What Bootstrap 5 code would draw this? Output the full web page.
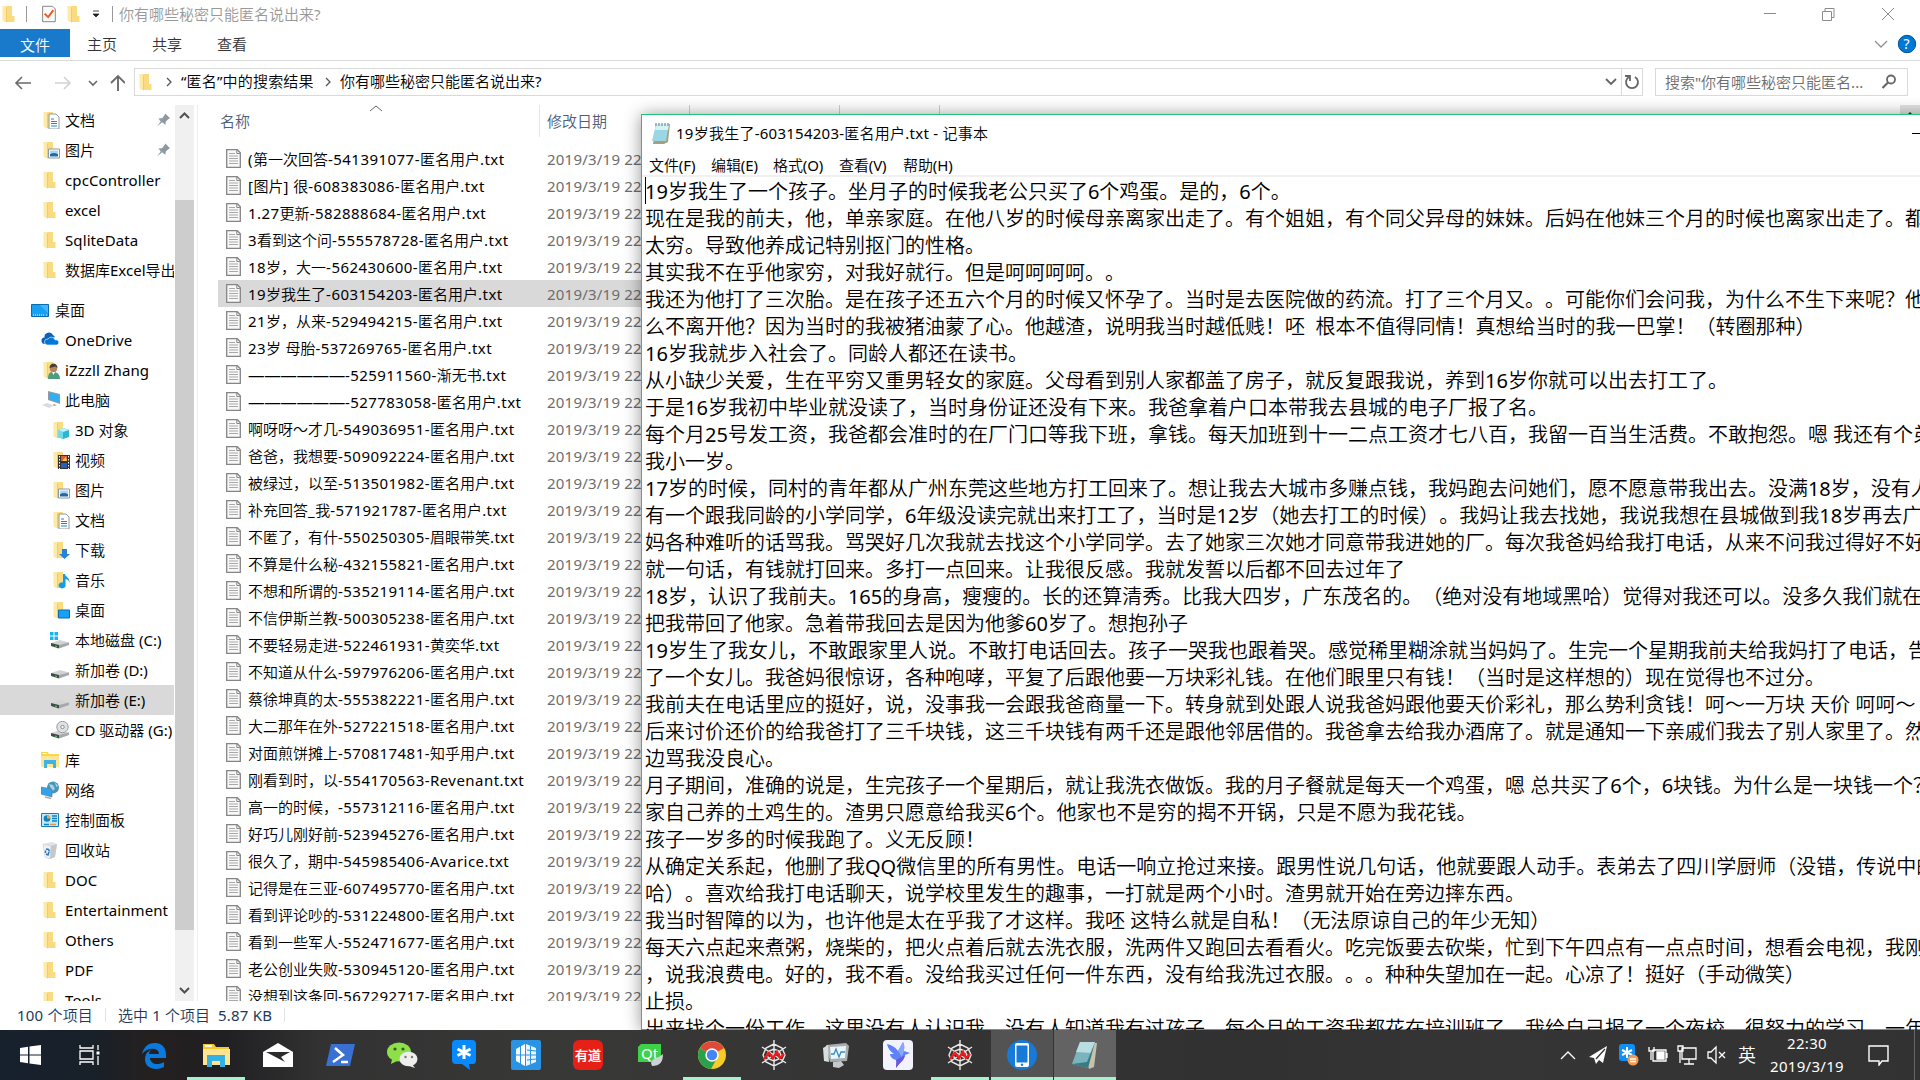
<!DOCTYPE html>
<html lang="zh-CN">
<head>
<meta charset="utf-8">
<title>你有哪些秘密只能匿名说出来?</title>
<link href="https://cdn.jsdelivr.net/npm/bootstrap@5.3.0/dist/css/bootstrap.min.css" rel="stylesheet">
<style>
body{width:1920px;height:1080px;overflow:hidden;background:#fff;color:#000;font:15px/20px "Noto Sans","Noto Sans CJK SC DemiLight","Noto Sans CJK SC",sans-serif;text-spacing-trim:space-all}
svg{display:block;flex:none}
.txt-nowrap{white-space:pre}
.titlebar{height:29px;color:#999;padding-bottom:1px}
.vline{width:1px;height:16px;background:#999}
.ribbon{height:32px;border-bottom:1px solid #dadbdc;color:#333}
.tab-file{width:70px;height:28px;background:#1979ca;color:#fff}
.tab-item{width:65px}
.navrow{height:44px;padding-top:7px}
.boxed{height:28px;border:1px solid #d9d9d9}
.crumbs{padding-bottom:2px}
.addr{width:1509px;margin-left:9px}
.search{width:253px;margin-left:12px;color:#6d6d6d}
.refresh{width:21px;height:26px;border-left:1px solid #d9d9d9}
.mainrow{height:896px;overflow:hidden}
.side{width:175px;height:896px;overflow:hidden}
.side-item{height:30px;width:174px;overflow:hidden}
.side-item.sel,.file-item.sel{background:#d9d9d9}
.side-gap{height:10px}
.sbar{width:20px;background:#f0f0f0;border-right:1px solid #fff}
.sbar-top{height:95px;padding-top:6px}
.sbar-thumb{height:730px;background:#cdcdcd}
.sbar-bottom{height:71px;padding-top:57px}
.files{margin-left:2px;border-left:1px solid #eee;flex:1}
.file-head{height:40px;color:#4c607a}
.head-name{width:342px;height:32px;border-right:1px solid #e5e5e5;padding-left:22px;padding-top:6px;position:relative}
.sort-mark{position:absolute;left:171px;top:0}
.head-date{padding:6px 0 0 7px}
.file-item{height:27px;margin-left:20px;padding-left:8px}
.file-item .fname{width:299px;margin-left:7px}
.file-item .fdate{color:#6d6d6d;letter-spacing:.22px}
.num{letter-spacing:.46px}
.dashes{font-size:16.6px;letter-spacing:-.45px}
.status{height:29px;color:#1e395b;padding-left:17px;padding-bottom:2px}
.status .sep{width:1px;height:14px;background:#e3e3e3}
.notepad{position:absolute;left:641px;top:114px;width:1300px;height:916px;background:#fff;border:1px solid #22c27a;box-shadow:0 1px 16px rgba(0,0,0,.42)}
.clipper{position:absolute;left:0;top:0;width:1920px;height:1030px;overflow:hidden}
.np-title{height:39px;padding-left:9px;padding-bottom:3px}
.np-title .caption{width:316px;margin-left:5px;letter-spacing:.25px}
.np-menu{height:23px;border-bottom:2px solid #f0f0f0;padding-left:7px;letter-spacing:-.1px}
.np-text{font-size:20px;line-height:27px;padding:1px 0 0 3px}
.caret{position:absolute;left:3px;top:62px;width:1px;height:27px;background:#000}
.colmark{position:absolute;top:105px;width:1px;height:9px;background:#cfcfcf}
.upstub{position:absolute;left:1900px;top:105px;width:20px;height:9px;background:#e2e2e2}
.tbar{position:relative;height:50px;background:linear-gradient(90deg,#17212d 0,#182029 90px,#252020 150px,#201f22 225px,#323232 320px,#383837 560px,#343434 900px,#303130 1250px,#353535 1500px,#323232 1920px);color:#fff}
.task{width:62px;height:50px;display:flex;align-items:center;justify-content:center;border-bottom:3px solid transparent;padding-top:3px;flex:none}
.task-first{width:61px}
.task.run{border-image:linear-gradient(90deg,transparent 5px,#a7efcd 5px,#a7efcd 57px,transparent 57px) 3}
.task.on{border-color:#a7efcd;background:#535353;background-clip:padding-box}
.task.on2{border-color:#a7efcd;background:#636363;margin-left:1px}
.clock{width:90px;line-height:23px;text-align:center;letter-spacing:.3px}
.tray{position:absolute;left:1560px;top:0;height:50px}
</style>
</head>
<body>
<svg width="0" height="0" class="position-absolute">
<defs>
<symbol id="folder" viewBox="0 0 18 18"><path d="M4 1h7v10h2.500v6H4z" fill="#f9dc82"/><path d="M1.500 1h4v16H4l-2.500-1.500z" fill="#ffe9a6"/><path d="M5 2l1 .5V17.500L5 17z" fill="#efcb6b"/></symbol>
<symbol id="doc" viewBox="0 0 18 18"><use href="#folder"/><path d="M7 3h7l3 3v12H7z" fill="#fff" stroke="#8d989f"/><path d="M9 8h3M9 10.500h6M9 12.500h6M9 15h6" stroke="#1b87c9" stroke-width="1.200"/></symbol>
<symbol id="pic" viewBox="0 0 18 18"><use href="#folder"/><path d="M6.500 8h11v9h-11z" fill="#fff" stroke="#8c999f"/><path d="M8 9.500h8v3H8z" fill="#a9d5f2"/><path d="M8 13q4-2 8 0v2.500H8z" fill="#2469a0"/></symbol>
<symbol id="desktop" viewBox="0 0 18 18"><path d="M.5 3.500h17v12H.5z" fill="#18a0f5" stroke="#0b6cad"/><path d="M2 14h12M15 14h1" stroke="#fff" stroke-dasharray="1 1"/><path d="M9 4h8v8z" fill="#45b7ff"/></symbol>
<symbol id="cloud" viewBox="0 0 18 18"><path d="M4 13a3.200 3.200 0 0 1-.5-6.500A4.500 4.500 0 0 1 12 4l2 2-7 3z" fill="#0b63b8"/><path d="M6 14a3 3 0 0 1 1-6 4 4 0 0 1 7.200 1A2.500 2.500 0 0 1 16 14z" fill="#0078d7" stroke="#fff" stroke-width=".6"/></symbol>
<symbol id="user" viewBox="0 0 18 18"><use href="#folder"/><path d="M6 18c0-6 2-7 5-7s7 1 7 7z" fill="#509c7d"/><circle cx="11.500" cy="7.500" r="3.700" fill="#b9835f"/><path d="M7.500 7c0-6 8-6 8 0l-2-1.500z" fill="#493e37"/><path d="M10 11h3l-1.500 3z" fill="#fff"/></symbol>
<symbol id="pc" viewBox="0 0 18 18"><path d="M6 0l12 3v10L6 9z" fill="#8e9da7"/><path d="M7 1.500l10 2.500v7.500L7 8.300z" fill="#33aef2"/><path d="M0 14l5-2 7 2.500L7 17z" fill="#d7dde1"/><path d="M11 13l4 1-3 1z" fill="#899aa5"/></symbol>
<symbol id="cube" viewBox="0 0 18 18"><use href="#folder"/><path d="M6 9l5-2 6 2v7l-6 2-5-2z" fill="#2eb6cf"/><path d="M6 9l5 2v7l-5-2z" fill="#73dbe8"/><path d="M6 9l5-2 6 2-6 2z" fill="#bff3f6"/></symbol>
<symbol id="video" viewBox="0 0 18 18"><use href="#folder"/><path d="M6 4h12v14H6z" fill="#333"/><path d="M9 5h6v5H9z" fill="#e15a3a"/><path d="M9 12h6v5H9z" fill="#285ec0"/><path d="M10 10l4-4 1 4z" fill="#f6cd34"/><path d="M7.500 5v13M16.500 5v13" stroke="#fff" stroke-dasharray="1.500 1.500"/></symbol>
<symbol id="down" viewBox="0 0 18 18"><use href="#folder"/><path d="M10 8h5v5h3l-5.500 5L7 13h3z" fill="#2584d8"/></symbol>
<symbol id="music" viewBox="0 0 18 18"><use href="#folder"/><path d="M11 3h2c0 3 5 3 4.500 9-1-3-2-3.500-4-4v6a3.500 3 0 1 1-2.500-2.500z" fill="#159ce8"/></symbol>
<symbol id="deskf" viewBox="0 0 18 18"><use href="#folder"/><path d="M6.500 9h11v8h-11z" fill="#18a0f5" stroke="#0b6cad"/></symbol>
<symbol id="drive" viewBox="0 0 20 18"><path d="M1 12l9-3 9 2.500v1.500L10 17 1 14z" fill="#d2d3d6"/><path d="M1 12l8 2v3.500l-8-2.500z" fill="#454b4b"/><path d="M9 14l10-2.500v2.500L9 17.500z" fill="#a5a7aa"/><path d="M5 15l2 .6" stroke="#4cd964"/></symbol>
<symbol id="drivec" viewBox="0 0 20 18"><use href="#drive"/><path d="M0 1h3.500v3.500H0zM4.500 1H8v3.500H4.500zM0 5.500h3.500V9H0zM4.500 5.500H8V9H4.500z" fill="#16b4f0"/></symbol>
<symbol id="cd" viewBox="0 0 20 18"><use href="#drive"/><circle cx="12.500" cy="6" r="5.700" fill="#dfe2e4" stroke="#9a9a9a"/><circle cx="12.500" cy="6" r="1.700" fill="#fff" stroke="#888"/></symbol>
<symbol id="lib" viewBox="0 0 18 18"><path d="M0 1h7l1 2h10v12H0z" fill="#fbd64f"/><path d="M0 5h18v11H0z" fill="#ffe694"/><path d="M3 9h12v8h-3v-4H6v4H3z" fill="#3eb3e8"/><path d="M1.500 2.500h4" stroke="#fff"/></symbol>
<symbol id="net" viewBox="0 0 18 18"><circle cx="12" cy="6.500" r="6" fill="#4795bd"/><path d="M8 3l4 1 2 4-3 2zM14 1l3 4-2 1z" fill="#abd5e4"/><path d="M0 6l11 2v8L0 13z" fill="#2ea4ee" stroke="#667f8e" stroke-width=".7"/><path d="M4 16l6 1.500" stroke="#a8afb3" stroke-width="1.500"/></symbol>
<symbol id="panel" viewBox="0 0 18 18"><path d="M.5 2.500h17v13H.5z" fill="#bce9fd" stroke="#1680bd"/><circle cx="6" cy="7.500" r="3.300" fill="#1580be"/><path d="M6 7.500V4.200a3.300 3.300 0 0 1 3.300 3.300z" fill="#f9a537"/><path d="M11 5h5M11 7.500h5M11 10h5M3 13.500h5" stroke="#1680bd" stroke-width="1.500"/><path d="M9 13.500h6" stroke="#f0943b" stroke-width="1.500"/></symbol>
<symbol id="bin" viewBox="0 0 18 18"><path d="M2 3l9-2 5 2-2 13-5 2-5-2z" fill="#dfe3e6"/><path d="M2 3l8 2-1 13-5-2z" fill="#eff2f4" stroke="#c7ccd0" stroke-width=".6"/><path d="M10 5l6-2-2 13-5 2z" fill="#c3c8cc"/><path d="M5 8l2.500.5 1 2M8 11l-1 3-2-1M4.500 12V9.500" stroke="#2676c2" stroke-width="1.500" fill="none"/></symbol>
<symbol id="page" viewBox="0 0 15 19"><path d="M.7.700h10.600l3 3v14.600H.7z" fill="#f8f8f8" stroke="#858585" stroke-width="1.300"/><path d="M10.800 1v3.500h3" fill="none" stroke="#858585"/><path d="M3 4.500h6M3 7h9M3 9.500h9M3 12h9M3 14.500h9" stroke="#a9a9a9"/></symbol>
<symbol id="pin" viewBox="0 0 14 14"><path d="M9 0l5 5-1.500.8L9.500 8.500 9 12 5.500 9.500 0 14l4-5.500L1.500 5.500 5.500 5l2.500-3z" fill="#8d9aa4"/></symbol>
<symbol id="note" viewBox="0 0 20 22"><path d="M5 2h14l-2 18-4 2H2z" fill="#a79f80"/><path d="M5 2h13l-3 17H1z" fill="#9ad7e4"/><path d="M5 2h13l-1 6H4z" fill="#d5f2f4"/><path d="M5 1v3M8 1v3M11 1v3M14 1v3M17 1v3" stroke="#617680"/></symbol>
<symbol id="web" viewBox="0 0 32 32"><path d="M16 1v30M4 8l24 16M28 8L4 24M16 5L8 9 5 16l3 7 8 4 8-4 3-7-3-7zM16 10l-5 2-2 4 2 4 5 2 5-2 2-4-2-4z" fill="none" stroke="#e9e9e9" stroke-width="1.400"/><path d="M6 20l5-6 4 5 4-6 3 6 4-4" fill="none" stroke="#f11a1a" stroke-width="2.400"/></symbol>
<symbol id="star" viewBox="0 0 26 32"><path d="M5 1h16q4 0 4 4v16q0 4-3 4h-4l1 6-8-6H5q-4 0-4-4V5q0-4 4-4z" fill="#0789ff"/><path d="M13 6v14M6.500 10l13 6.500M19.500 10l-13 6.500" stroke="#fff" stroke-width="3"/></symbol>
</defs>
</svg>

<!-- explorer window -->
<header class="titlebar d-flex align-items-center">
  <svg width="18" height="18" style="margin-left:1px"><use href="#folder"/></svg><span class="vline" style="margin-left:7px"></span>
  <svg width="14" height="18" viewBox="0 0 16 19" style="margin-left:15px"><path d="M.7.700h11.500l3 3v14.600H.7z" fill="#fafafa" stroke="#777"/><path d="M3 9l4 4 6-8" fill="none" stroke="#f0581c" stroke-width="2.200"/></svg>
  <svg width="18" height="18" style="margin-left:10px"><use href="#folder"/></svg>
  <svg width="8" height="8" style="margin-left:8px" viewBox="0 0 8 8"><path d="M1 1h6M1 4h6L4 7z" fill="#222" stroke="#222" stroke-width=".8"/></svg>
  <span class="vline" style="margin-left:12px"></span><span class="txt-nowrap" style="margin-left:6px">你有哪些秘密只能匿名说出来?</span>
  <svg class="ms-auto" width="132" height="16" style="margin-right:25px" viewBox="0 0 132 16" fill="none" stroke="#8c8c8c"><path d="M1 7.500h12M59.500 5.500h9v9h-9zM62 5V2.500h9v9h-2M119 2l12 12M131 2l-12 12"/></svg>
</header>
<nav class="ribbon d-flex">
  <div class="tab-file d-flex align-items-center justify-content-center pt-1 px-2">文件</div>
  <div class="d-flex pt-1" style="padding-left:17px;margin-top:1px"><span class="tab-item">主页</span><span class="tab-item">共享</span><span class="tab-item">查看</span></div>
  <svg class="ms-auto" width="46" height="20" style="margin-top:5px" viewBox="0 0 46 20"><path d="M1 7l6 6 6-6" fill="none" stroke="#909090" stroke-width="1.300"/><circle cx="33" cy="10" r="8.700" fill="#0078d7" stroke="#0a4f94"/><text x="29.500" y="15" font-size="14" fill="#fff">?</text></svg>
</nav>
<div class="navrow d-flex">
  <svg width="125" height="28" viewBox="0 0 125 28" fill="none" stroke="#6a6a6a" stroke-width="1.600"><path d="M31 15H17M22 9l-6 6 6 6"/><path d="M55 15h14M64 9l6 6-6 6" stroke="#d2d2d2"/><path d="M89 13l4 4 4-4"/><path d="M118 23V9M111 15l7-7 7 7" stroke-width="1.900"/></svg>
  <div class="addr boxed d-flex align-items-center">
    <svg width="18" height="18" style="margin-left:3px"><use href="#folder"/></svg>
    <svg width="6" height="10" style="margin-left:10px" viewBox="0 0 6 10"><path d="M1 1l4 4-4 4" fill="none" stroke="#555" stroke-width="1.300"/></svg>
    <span class="txt-nowrap crumbs" style="width:134px;margin-left:9px;letter-spacing:.2px">“匿名”中的搜索结果</span>
    <svg width="6" height="10" style="margin-left:10px" viewBox="0 0 6 10"><path d="M1 1l4 4-4 4" fill="none" stroke="#555" stroke-width="1.300"/></svg>
    <span class="txt-nowrap crumbs" style="margin-left:9px">你有哪些秘密只能匿名说出来?</span>
    <svg width="12" height="8" class="ms-auto me-1" viewBox="0 0 12 8"><path d="M1 1l5 5 5-5" fill="none" stroke="#666" stroke-width="1.900"/></svg>
    <div class="refresh d-flex align-items-center justify-content-center"><svg width="16" height="16" viewBox="0 0 16 16"><path d="M5 3a6 6 0 1 0 6 0M1 2h5v5" fill="none" stroke="#666" stroke-width="1.800"/></svg></div>
  </div>
  <div class="search boxed d-flex align-items-center"><span class="txt-nowrap" style="margin-left:9px">搜索"你有哪些秘密只能匿名...</span><svg class="ms-auto" width="16" height="16" style="margin-right:10px" viewBox="0 0 16 16"><circle cx="10" cy="5.500" r="4" fill="none" stroke="#666" stroke-width="1.800"/><path d="M7 8.500L1.500 14" stroke="#666" stroke-width="2.200"/></svg></div>
</div>
<main class="mainrow d-flex">
  <aside class="side" id="side"></aside>
  <div class="sbar">
    <div class="sbar-top"><svg width="19" height="8" viewBox="0 0 19 8"><path d="M5 7l4.500-4.500L14 7" fill="none" stroke="#505050" stroke-width="2"/></svg></div>
    <div class="sbar-thumb"></div>
    <div class="sbar-bottom"><svg width="19" height="8" viewBox="0 0 19 8"><path d="M5 1l4.500 4.500L14 1" fill="none" stroke="#505050" stroke-width="2"/></svg></div>
  </div>
  <section class="files">
    <div class="file-head d-flex"><div class="head-name">名称<svg class="sort-mark" width="14" height="7" viewBox="0 0 14 7"><path d="M1 6l6-5 6 5" fill="none" stroke="#666"/></svg></div><div class="head-date">修改日期</div></div>
    <div id="files"></div>
  </section>
</main>
<footer class="status d-flex align-items-center"><span class="txt-nowrap" style="width:88px;letter-spacing:.2px">100 个项目</span><span class="sep"></span><span class="txt-nowrap" style="width:100px;margin-left:12px;letter-spacing:.1px">选中 1 个项目</span><span class="txt-nowrap" style="width:66px;letter-spacing:.2px">5.87 KB</span><span class="sep"></span></footer>

<!-- notepad window, overlapping the explorer -->
<div class="clipper">
  <div class="upstub"><svg width="20" height="9" viewBox="0 0 20 9"><path d="M8 9l2-2 2 2z" fill="#333"/></svg></div>
  <span class="colmark" style="left:689px"></span><span class="colmark" style="left:839px"></span><span class="colmark" style="left:939px"></span>
  <div class="notepad">
    <div class="np-title d-flex align-items-center"><svg width="20" height="22"><use href="#note"/></svg><span class="txt-nowrap caption">19岁我生了-603154203-匿名用户.txt - 记事本</span><svg width="14" height="3" style="margin-left:920px"><path d="M0 1.500h14" stroke="#000"/></svg></div>
    <div class="np-menu d-flex align-items-center"><span style="width:62px">文件(F)</span><span style="width:62px">编辑(E)</span><span style="width:66px">格式(O)</span><span style="width:64px">查看(V)</span><span>帮助(H)</span></div>
    <div class="caret"></div>
    <div class="np-text txt-nowrap">19岁我生了一个孩子。坐月子的时候我老公只买了6个鸡蛋。是的，6个。
现在是我的前夫，他，单亲家庭。在他八岁的时候母亲离家出走了。有个姐姐，有个同父异母的妹妹。后妈在他妹三个月的时候也离家出走了。都
太穷。导致他养成记特别抠门的性格。
其实我不在乎他家穷，对我好就行。但是呵呵呵呵。。
我还为他打了三次胎。是在孩子还五六个月的时候又怀孕了。当时是去医院做的药流。打了三个月又。。可能你们会问我，为什么不生下来呢？他
么不离开他？因为当时的我被猪油蒙了心。他越渣，说明我当时越低贱！呸  根本不值得同情！真想给当时的我一巴掌！（转圈那种）
16岁我就步入社会了。同龄人都还在读书。
从小缺少关爱，生在平穷又重男轻女的家庭。父母看到别人家都盖了房子，就反复跟我说，养到16岁你就可以出去打工了。
于是16岁我初中毕业就没读了，当时身份证还没有下来。我爸拿着户口本带我去县城的电子厂报了名。
每个月25号发工资，我爸都会准时的在厂门口等我下班，拿钱。每天加班到十一二点工资才七八百，我留一百当生活费。不敢抱怨。嗯 我还有个弟
我小一岁。
17岁的时候，同村的青年都从广州东莞这些地方打工回来了。想让我去大城市多赚点钱，我妈跑去问她们，愿不愿意带我出去。没满18岁，没有人
有一个跟我同龄的小学同学，6年级没读完就出来打工了，当时是12岁（她去打工的时候）。我妈让我去找她，我说我想在县城做到我18岁再去广
妈各种难听的话骂我。骂哭好几次我就去找这个小学同学。去了她家三次她才同意带我进她的厂。每次我爸妈给我打电话，从来不问我过得好不好
就一句话，有钱就打回来。多打一点回来。让我很反感。我就发誓以后都不回去过年了
18岁，认识了我前夫。165的身高，瘦瘦的。长的还算清秀。比我大四岁，广东茂名的。（绝对没有地域黑哈）觉得对我还可以。没多久我们就在
把我带回了他家。急着带我回去是因为他爹60岁了。想抱孙子
19岁生了我女儿，不敢跟家里人说。不敢打电话回去。孩子一哭我也跟着哭。感觉稀里糊涂就当妈妈了。生完一个星期我前夫给我妈打了电话，告
了一个女儿。我爸妈很惊讶，各种咆哮，平复了后跟他要一万块彩礼钱。在他们眼里只有钱！（当时是这样想的）现在觉得也不过分。
我前夫在电话里应的挺好，说，没事我一会跟我爸商量一下。转身就到处跟人说我爸妈跟他要天价彩礼，那么势利贪钱！呵～一万块 天价 呵呵～
后来讨价还价的给我爸打了三千块钱，这三千块钱有两千还是跟他邻居借的。我爸拿去给我办酒席了。就是通知一下亲戚们我去了别人家里了。然
边骂我没良心。
月子期间，准确的说是，生完孩子一个星期后，就让我洗衣做饭。我的月子餐就是每天一个鸡蛋，嗯 总共买了6个，6块钱。为什么是一块钱一个？
家自己养的土鸡生的。渣男只愿意给我买6个。他家也不是穷的揭不开锅，只是不愿为我花钱。
孩子一岁多的时候我跑了。义无反顾！
从确定关系起，他删了我QQ微信里的所有男性。电话一响立抢过来接。跟男性说几句话，他就要跟人动手。表弟去了四川学厨师（没错，传说中的
哈）。喜欢给我打电话聊天，说学校里发生的趣事，一打就是两个小时。渣男就开始在旁边摔东西。
我当时智障的以为，也许他是太在乎我了才这样。我呸 这特么就是自私！（无法原谅自己的年少无知）
每天六点起来煮粥，烧柴的，把火点着后就去洗衣服，洗两件又跑回去看看火。吃完饭要去砍柴，忙到下午四点有一点点时间，想看会电视，我刚
，说我浪费电。好的，我不看。没给我买过任何一件东西，没有给我洗过衣服。。。种种失望加在一起。心凉了！挺好（手动微笑）
止损。
出来找个一份工作。这里没有人认识我。没有人知道我有过孩子。每个月的工资我都花在培训班了。我给自己报了一个夜校。很努力的学习。一年</div>
  </div>
</div>

<!-- taskbar -->
<div class="tbar d-flex">
  <div class="task task-first"><svg width="21" height="20" viewBox="0 0 21 20"><path d="M0 3l8-1.200V9.500H0zM9.500 1.600L21 0v9.500H9.500zM0 10.500h8v7.700L0 17zM9.500 10.500H21V20L9.500 18.400z" fill="#fff"/></svg></div>
  <div class="task" style="padding-right:4px"><svg width="22" height="20" viewBox="0 0 22 20" fill="none" stroke="#fff" stroke-width="1.300"><path d="M1 0v3h13V0M1 20v-3h13v3M1 6h13v8H1zM19 0v5M19 11v9"/><path d="M17.500 8h3" stroke-width="3"/></svg></div>
  <div class="task"><svg width="26" height="27" viewBox="0 0 26 27"><path d="M1 12C3 4 8 1 14 1c8 0 11 6 11 12v3H9c0 6 8 8 14 4v5c-8 4-19 2-19-8 0-5 3-8 6-9-2 2-2 3-2 4h10c0-7-12-7-17 0z" fill="#0a7bdc"/></svg></div>
  <div class="task run"><svg width="28" height="24" viewBox="0 0 28 24"><path d="M1 1h11l2 3h13v16H1z" fill="#f6c633"/><path d="M1 6h27v16H1z" fill="#ffe591"/><path d="M5 12h18v12h-5v-6h-8v6H5z" fill="#33b1e5"/><path d="M3 3h7" stroke="#fff" stroke-width="2"/></svg></div>
  <div class="task"><svg width="30" height="24" viewBox="0 0 30 24"><path d="M0 9L15 0l15 9v15H0z" fill="#fff"/><path d="M3 9h24l-9 5 4 5z" fill="#2c2c2c"/></svg></div>
  <div class="task"><svg width="29" height="22" viewBox="0 0 29 22"><path d="M5 0h24l-5 22H0z" fill="#3970d2"/><path d="M9 4l8 7-10 7M15 18h7" fill="none" stroke="#fff" stroke-width="2.500"/></svg></div>
  <div class="task"><svg width="31" height="26" viewBox="0 0 31 26"><ellipse cx="12" cy="10" rx="12" ry="9.500" fill="#8ee04a"/><path d="M5 17l-1 5 6-3z" fill="#8ee04a"/><circle cx="8" cy="7" r="1.600" fill="#375d14"/><circle cx="16" cy="7" r="1.600" fill="#375d14"/><ellipse cx="21.500" cy="17" rx="9" ry="7.300" fill="#eee"/><path d="M25 22l3 4-6-2z" fill="#eee"/><circle cx="18.500" cy="15" r="1.200" fill="#777"/><circle cx="25" cy="15" r="1.200" fill="#777"/></svg></div>
  <div class="task"><svg width="26" height="32"><use href="#star"/></svg></div>
  <div class="task"><svg width="30" height="30" viewBox="0 0 30 30"><rect width="30" height="30" rx="2" fill="#2b93e3"/><path d="M5 9l9-5v22l-9-5z" fill="#fff"/><path d="M15 4l10 4v14l-10 4z" fill="#e8f4ff"/><path d="M5 15h20M16 10l9 1M16 20l9-1M9.500 6v18M19.500 6v18M14.500 4v22" stroke="#2b93e3" stroke-width="1"/></svg></div>
  <div class="task"><svg width="30" height="30" viewBox="0 0 30 30"><rect width="30" height="30" rx="6" fill="#e62016"/><text x="15" y="20" text-anchor="middle" font-size="13" font-weight="900" fill="#fff">有道</text></svg></div>
  <div class="task"><svg width="26" height="24" viewBox="0 0 26 24"><path d="M4 1h20v18H1V4z" fill="#3ed24b"/><text x="12.500" y="16" text-anchor="middle" font-size="15" fill="#fff">Qt</text><path d="M26 11c0 8-3 12-11 12l-1-3c2-6 7-4 12-9z" fill="#cfd1d3"/></svg></div>
  <div class="task run"><svg width="28" height="28" viewBox="0 0 28 28"><circle cx="14" cy="14" r="14" fill="#f7cc28"/><path d="M14 14L2 7a14 14 0 0 1 24.100 0z" fill="#df4939"/><path d="M14 14L1.900 7A14 14 0 0 0 13 28l6-11z" fill="#2ba14b"/><circle cx="14" cy="14" r="6.700" fill="#fff"/><circle cx="14" cy="14" r="5.200" fill="#4285f4"/></svg></div>
  <div class="task"><svg width="32" height="32"><use href="#web"/></svg></div>
  <div class="task"><svg width="28" height="26" viewBox="0 0 28 26"><path d="M4 3l20-2 3 3-2 15-17 1z" fill="#a8adaf"/><path d="M8 5l16-1-1 12-14 1z" fill="#e9f6fc"/><path d="M9 12h3l2-5 3 8 2-5h4" fill="none" stroke="#3a8ac0" stroke-width="1.300"/><path d="M11 20l8-1 3 4-5 3-6-1z" fill="#c5c9cb"/><path d="M1 6l5-3 1 17-5-1z" fill="#dadddd"/></svg></div>
  <div class="task"><svg width="30" height="30" viewBox="0 0 30 30"><rect width="30" height="30" rx="4" fill="#f2f3ff"/><path d="M4 4c5 1 8 3 11 7l5-9c2 4 1 6 1 9l6 2-5 2c-1 6-5 7-9 13 0-5 1-6 0-8-4-1-6-4-6-6l4 0c-3-2-6-5-7-10z" fill="#5f82f8"/><path d="M15 11l5-9c2 4 1 6 1 9l-2 6z" fill="#86a6ff"/><path d="M13 28c0-5 1-6 0-8l9-5c-1 6-5 7-9 13z" fill="#6a58dd"/></svg></div>
  <div class="task run"><svg width="32" height="32"><use href="#web"/></svg></div>
  <div class="task on"><svg width="30" height="30" viewBox="0 0 30 30"><circle cx="15" cy="15" r="15" fill="#187ad8"/><rect x="8" y="3" width="14" height="24" rx="2" fill="#fff"/><path d="M9.500 5.500h11v17h-11z" fill="#187ad8"/><circle cx="15" cy="24.800" r="1.200" fill="#187ad8"/></svg></div>
  <div class="task on2"><svg width="28" height="28" viewBox="0 0 28 28"><path d="M10 2h16l-3 24-5 2z" fill="#c8c2a8"/><path d="M9 1h15l-7 26-16-4z" fill="#7bb4bd"/><path d="M9 1h15l-3 11-16-1z" fill="#b9dde0"/><path d="M1 23l16 4 7-26-8 20z" fill="#397a84"/></svg></div>
  <div class="tray d-flex align-items-center">
    <svg width="198" height="24" viewBox="1560 0 198 24" fill="none" stroke="#fff" stroke-width="1.300"><path d="M1561 16l7-7 7 7"/><path d="M1607 3l-18 11 5 1 2 6 3-4 4 3z" fill="#fff" stroke="none"/><path d="M1596 16l9-10" stroke="#333"/><rect x="1619" y="1" width="16" height="17" rx="3" fill="#108ff5" stroke="none"/><path d="M1627 4v11M1622 7l10 5M1632 7l-10 5" stroke-width="2"/><circle cx="1633" cy="17" r="5.500" fill="#f39b50" stroke="none"/><path d="M1630 16h6M1630 18.500h6"/><path d="M1653 7h13v11h-13zM1667 10v5M1649 4v4h5V4M1651 9v8"/><path d="M1657 9h7v7h-7z" fill="#fff"/><path d="M1682 5h14v11h-14zM1689 16v5M1684 21h10M1678 3h5v5h-5zM1680 8v12"/><path d="M1708 9h3l5-5v16l-5-5h-3zM1719 9l6 6M1725 9l-6 6"/><text x="1738" y="19" font-size="18" fill="#fff" stroke="none">英</text></svg>
    <div class="clock" style="margin-left:4px">22:30<br>2019/3/19</div>
    <svg width="22" height="22" style="margin-left:16px" viewBox="0 0 22 22"><path d="M1 2h19v15h-6l-3 4v-4H1z" fill="none" stroke="#fff" stroke-width="1.400"/></svg>
    <span style="width:1px;height:50px;background:#666;margin-left:24px"></span>
  </div>
</div>

<script src="https://cdn.jsdelivr.net/npm/bootstrap@5.3.0/dist/js/bootstrap.bundle.min.js"></script>
<script>
// [icon, label, icon x, text x, extra]
const side = [
 ['doc','文档',42,65,'pin'],['pic','图片',42,65,'pin'],['folder','cpcController',42,65],['folder','excel',42,65],['folder','SqliteData',42,65],['folder','数据库Excel导出',42,65],null,
 ['desktop','桌面',31,55],['cloud','OneDrive',41,65],['user','iZzzll Zhang',42,65],['pc','此电脑',42,65],
 ['cube','3D 对象',52,75],['video','视频',52,75],['pic','图片',52,75],['doc','文档',52,75],['down','下载',52,75],['music','音乐',52,75],['deskf','桌面',52,75],
 ['drivec','本地磁盘 (C:)',50,75],['drive','新加卷 (D:)',50,75],['drive','新加卷 (E:)',50,75,'sel'],['cd','CD 驱动器 (G:)',50,75],
 ['lib','库',41,65],['net','网络',41,65],['panel','控制面板',41,65],['bin','回收站',41,65],['folder','DOC',42,65],['folder','Entertainment',42,65],['folder','Others',42,65],['folder','PDF',42,65],['folder','Tools',42,65]];
document.getElementById('side').innerHTML = side.map(s => {
  if (!s) return '<div class="side-gap"></div>';
  const w = /^(drive|cd)/.test(s[0]) ? 20 : 18;
  const ls = /^[\x20-\x7e]+$/.test(s[1]) ? ';letter-spacing:.1px' : '';
  return `<div class="side-item d-flex align-items-center ${s[4]==='sel'?'sel':''}" style="padding-left:${s[2]}px"><svg width="${w}" height="18"><use href="#${s[0]}"/></svg><span class="txt-nowrap" style="margin-left:${s[3]-s[2]-w}px${ls}">${s[1]}</span>${s[4]==='pin'?'<svg class="ms-auto me-1" width="13" height="14"><use href="#pin"/></svg>':''}</div>`;
}).join('');
const files = `(第一次回答-541391077-匿名用户
[图片] 很-608383086-匿名用户
1.27更新-582888684-匿名用户
3看到这个问-555578728-匿名用户
18岁，大一-562430600-匿名用户
19岁我生了-603154203-匿名用户
21岁，从来-529494215-匿名用户
23岁 母胎-537269765-匿名用户
——————-525911560-渐无书
——————-527783058-匿名用户
啊呀呀～才几-549036951-匿名用户
爸爸，我想要-509092224-匿名用户
被绿过，以至-513501982-匿名用户
补充回答_我-571921787-匿名用户
不匿了，有什-550250305-眉眼带笑
不算是什么秘-432155821-匿名用户
不想和所谓的-535219114-匿名用户
不信伊斯兰教-500305238-匿名用户
不要轻易走进-522461931-黄奕华
不知道从什么-597976206-匿名用户
蔡徐坤真的太-555382221-匿名用户
大二那年在外-527221518-匿名用户
对面煎饼摊上-570817481-知乎用户
刚看到时，以-554170563-Revenant
高一的时候，-557312116-匿名用户
好巧儿刚好前-523945276-匿名用户
很久了，期中-545985406-Avarice
记得是在三亚-607495770-匿名用户
看到评论吵的-531224800-匿名用户
看到一些军人-552471677-匿名用户
老公创业失败-530945120-匿名用户
没想到这条回-567292717-匿名用户`.split('\n');
document.getElementById('files').innerHTML = files.map((f,i) => {
  const label = (f+'.txt').replace(/[\x20-\x7e]+/g, m => `<span class="num">${m}</span>`).replace(/—+/, m => `<span class="dashes">${m}</span>`);
  return `<div class="file-item d-flex align-items-center ${i===5?'sel':''}"><svg width="15" height="19"><use href="#page"/></svg><span class="fname txt-nowrap">${label}</span><span class="fdate txt-nowrap">2019/3/19 22</span></div>`;
}).join('');
</script>
</body>
</html>
